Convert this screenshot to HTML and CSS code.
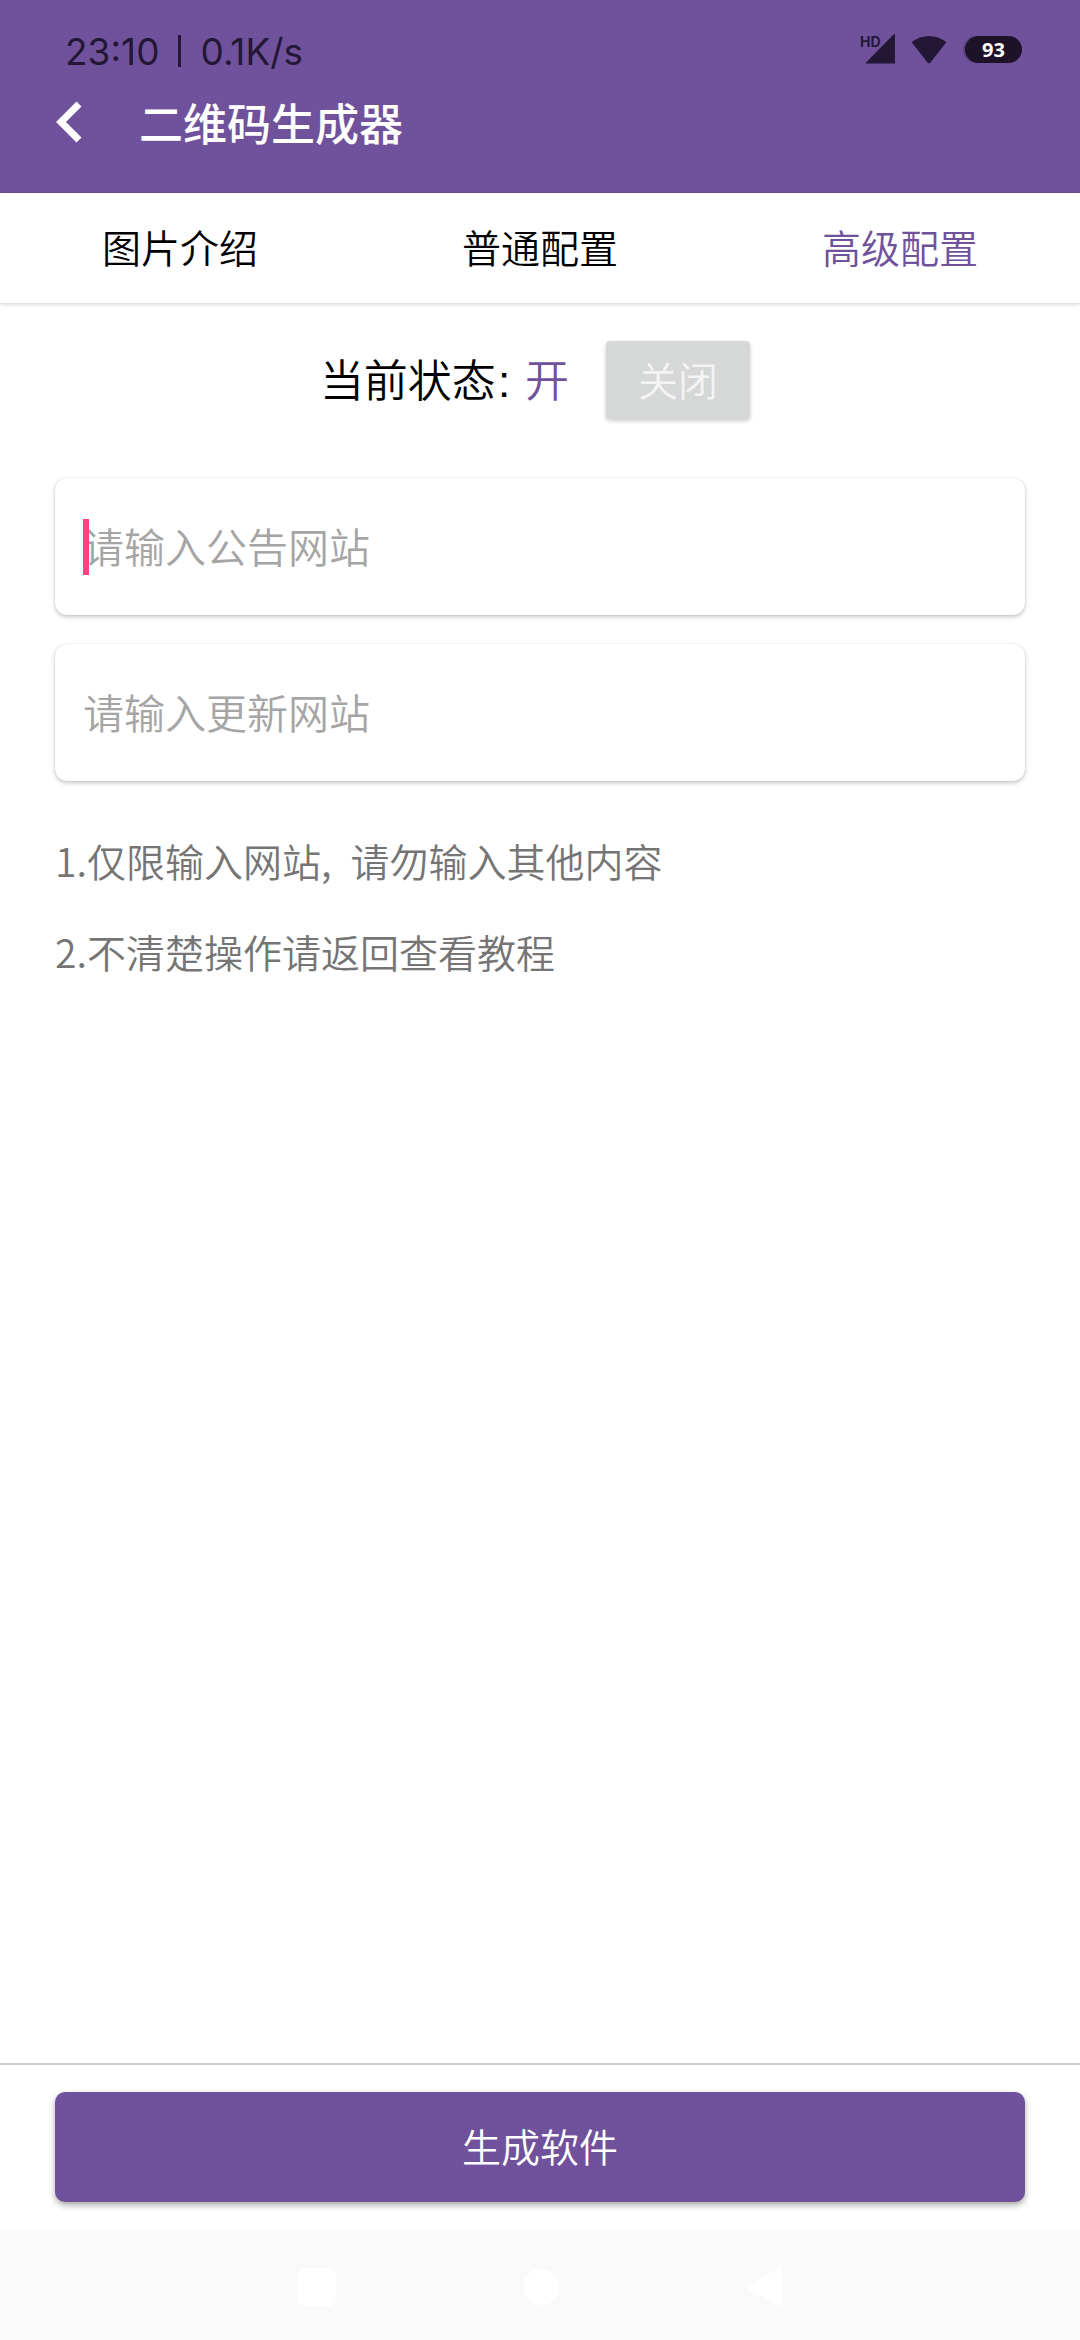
FILE: index.html
```html
<!DOCTYPE html>
<html lang="zh-CN">
<head>
  <meta charset="UTF-8" />
  <meta name="viewport" content="width=device-width, initial-scale=1.0"/>
  <title>二维码生成器</title>
  <link rel="stylesheet" href="styles.css">
</head>
<body>
  <div class="app">
    <!-- Header -->
    <header class="header">
      <div class="status-bar">
        <span class="status-text">23:10<i class="status-sep"></i>0.1K/s</span>
        <div class="status-icons">
          <span class="signal">
            <span class="signal-hd">HD</span>
            <svg width="30" height="30" viewBox="0 0 30 30"><path d="M30 1V29.500H1.500Q0 29.500 1 28.500L28.500 0.500Q30 -0.500 30 1Z" fill="#231735"/></svg>
          </span>
          <svg class="wifi" width="36" height="30" viewBox="0 0 36 30"><path d="M0.500 8Q18 -4 35.500 8L19.500 28.500Q18 30 16.500 28.500Z" fill="#231735"/></svg>
          <span class="battery">93</span>
        </div>
      </div>
      <div class="title-bar">
        <svg class="back" width="30" height="44" viewBox="0 0 30 44"><path d="M24 4L6 22L24 40" fill="none" stroke="#fff" stroke-width="7"/></svg>
        <h1 class="title">二维码生成器</h1>
      </div>
    </header>

    <!-- Tabs -->
    <nav class="tabs">
      <div class="tab">图片介绍</div>
      <div class="tab">普通配置</div>
      <div class="tab tab-active">高级配置</div>
    </nav>

    <!-- Content -->
    <main class="content">
      <div class="state-row">
        <span class="state-label">当前状态<span class="state-colon">:</span><em class="state-value">开</em></span>
        <button class="state-btn" type="button">关闭</button>
      </div>
      <div class="field"><span class="caret"></span><span class="placeholder">请输入公告网站</span></div>
      <div class="field"><span class="placeholder">请输入更新网站</span></div>
      <p class="hint hint-first">1.仅限输入网站<span class="hint-comma">,</span>请勿输入其他内容</p>
      <p class="hint">2.不清楚操作请返回查看教程</p>
    </main>

    <!-- Footer -->
    <footer class="footer">
      <button class="submit" type="button">生成软件</button>
    </footer>

    <!-- System nav -->
    <div class="sys-nav">
      <span class="sys-square"></span>
      <span class="sys-circle"></span>
      <svg width="36" height="40" viewBox="0 0 36 40"><path d="M34 1.500V38.500L1 20Z" fill="#fff" stroke="#fff" stroke-width="2" stroke-linejoin="round"/></svg>
    </div>
  </div>
</body>
</html>
```

FILE: styles.css
```css
* {
  box-sizing: border-box;
}
body {
  margin: 0;
  background: #fff;
  font-family: "Noto Sans CJK SC", "Noto Sans", sans-serif;
  font-weight: 350;
}
.app {
  width: 1080px;
  height: 2340px;
  display: flex;
  flex-direction: column;
}
.header {
  height: 193px;
  background: #70529c;
  padding: 0 55px;
}
.status-bar {
  height: 100px;
  display: flex;
  justify-content: space-between;
  align-items: center;
  padding-left: 10px;
  padding-top: 2px;
}
.status-text {
  display: flex;
  align-items: center;
  font-family: Inter, sans-serif;
  font-weight: 400;
  font-size: 37px;
  color: #231735;
}
.status-sep {
  width: 3px;
  height: 32px;
  margin: 0 19px 0 19px;
  background: #231735;
}
.status-icons {
  display: flex;
  align-items: center;
  gap: 18px;
  margin-right: 3px;
  margin-top: -4px;
}
.signal {
  position: relative;
  display: block;
  width: 30px;
  height: 30px;
}
.signal-hd {
  position: absolute;
  left: -5px;
  top: -1px;
  font-family: Inter, sans-serif;
  font-size: 14px;
  font-weight: 700;
  color: #231735;
}
.wifi {
  margin-left: -2px;
}
.battery {
  width: 57px;
  height: 27px;
  border-radius: 14px;
  background: #1d1228;
  box-shadow: -2px 0 0 rgba(29, 18, 40, 0.25);
  color: #fff;
  font-family: "Open Sans", sans-serif;
  font-size: 20px;
  font-weight: 700;
  line-height: 27px;
  text-align: center;
}
.title-bar {
  display: flex;
  align-items: center;
  height: 50px;
  margin-top: -3px;
}
.back {
  width: 30px;
  margin-right: 54px;
}
.title {
  margin: 0;
  font-size: 44px;
  font-weight: 500;
  color: #fff;
}
.tabs {
  display: flex;
  height: 110px;
  background: #fff;
  box-shadow: 0 1px 4px rgba(0, 0, 0, 0.2);
}
.tab {
  flex: 1;
  display: flex;
  align-items: center;
  justify-content: center;
  padding-bottom: 4px;
  font-size: 39px;
  color: #000;
}
.tab-active {
  color: #70529c;
}
.content {
  flex: 1;
  padding: 0 55px;
}
.state-row {
  display: flex;
  align-items: center;
  justify-content: center;
  gap: 37px;
  margin-top: 38px;
  margin-bottom: 59px;
  padding-right: 10px;
}
.state-label {
  padding-bottom: 4px;
  font-size: 44px;
  color: #000;
}
.state-colon {
  margin: 0 15px 0 2px;
  font-family: "Liberation Sans", sans-serif;
}
.state-value {
  font-style: normal;
  color: #70529c;
}
.state-btn {
  width: 144px;
  height: 78px;
  padding-bottom: 4px;
  border: 0;
  border-radius: 4px;
  background: #d6d7d7;
  box-shadow: 0 2px 4px rgba(0, 0, 0, 0.2);
  color: #f4f4f4;
  font-family: inherit;
  font-weight: 350;
  font-size: 40px;
}
.field {
  position: relative;
  height: 137px;
  margin-bottom: 29px;
  padding: 0 0 4px 28px;
  display: flex;
  align-items: center;
  background: #fff;
  border-radius: 12px;
  box-shadow: 0 2px 4px rgba(0, 0, 0, 0.22), 0 0 1px rgba(0, 0, 0, 0.2);
}
.placeholder {
  font-size: 41px;
  color: #a5a5a5;
}
.caret {
  position: absolute;
  left: 28px;
  top: 41px;
  width: 6px;
  height: 56px;
  background: #ff3f80;
}
.hint {
  margin: 0 0 36px;
  font-size: 39px;
  line-height: 55px;
  color: #757575;
}
.hint-first {
  margin-top: 52px;
}
.hint-comma {
  margin-right: 19px;
}
.footer {
  height: 167px;
  padding: 27px 55px 0;
  border-top: 2px solid #cfcfcf;
}
.submit {
  width: 100%;
  height: 110px;
  padding-bottom: 6px;
  border: 0;
  border-radius: 10px;
  background: #70529c;
  box-shadow: 0 3px 6px rgba(0, 0, 0, 0.35);
  color: #fff;
  font-family: inherit;
  font-weight: 350;
  font-size: 39px;
}
.sys-nav {
  height: 110px;
  background: #fafafa;
  display: flex;
  align-items: center;
  justify-content: center;
  gap: 187px;
  padding-top: 4px;
}
.sys-square {
  width: 38px;
  height: 38px;
  border-radius: 8px;
  background: #fff;
}
.sys-circle {
  width: 36px;
  height: 36px;
  border-radius: 50%;
  background: #fff;
}
```
